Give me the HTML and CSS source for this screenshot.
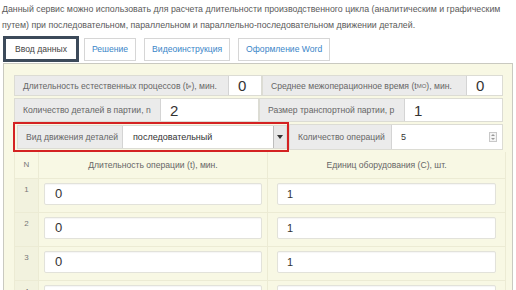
FILE: index.html
```html
<!DOCTYPE html>
<html lang="ru">
<head>
  <meta charset="UTF-8">
  <title>Расчет длительности производственного цикла</title>
  <link rel="stylesheet" href="styles.css">
</head>
<body>
  <!-- Описание -->
  <p class="intro">Данный сервис можно использовать для расчета длительности производственного цикла (аналитическим и графическим<br>путем) при последовательном, параллельном и параллельно-последовательном движении деталей.</p>

  <!-- Вкладки -->
  <div class="tabs">
    <span class="tab active">Ввод данных</span>
    <span class="tab">Решение</span>
    <span class="tab">Видеоинструкция</span>
    <span class="tab">Оформление Word</span>
  </div>

  <div class="panel">
    <div class="row">
      <div class="group g-te">
        <span class="addon">Длительность естественных процессов (t<sub>e</sub>), мин.</span>
        <span class="field big">0</span>
      </div>
      <div class="group g-tmo">
        <span class="addon">Среднее межоперационное время (t<sub>МО</sub>), мин.</span>
        <span class="field big">0</span>
      </div>
    </div>

    <div class="row row-two">
      <div class="group g-n">
        <span class="addon">Количество деталей в партии, n</span>
        <span class="field big">2</span>
      </div>
      <div class="group g-p">
        <span class="addon">Размер транспортной партии, p</span>
        <span class="field big">1</span>
      </div>
    </div>

    <div class="row row-move">
      <div class="highlight">
        <div class="group g-move">
          <span class="addon">Вид движения деталей</span>
          <span class="select">
            <span class="select-text">последовательный</span>
            <span class="select-btn"><svg width="6" height="4" viewBox="0 0 6 4"><path d="M0 0h6L3 4z" fill="#333"/></svg></span>
          </span>
        </div>
      </div>
      <div class="group g-ops">
        <span class="addon">Количество операций</span>
        <span class="field small">5
          <span class="spin"><svg width="8" height="10" viewBox="0 0 8 10"><rect x="0.5" y="0.5" width="7" height="9" fill="#f4f4f4" stroke="#c8c8c8"/><path d="M2 4h4L4 2zM2 6h4L4 8z" fill="#999"/></svg></span>
        </span>
      </div>
    </div>

    <table class="ops">
      <thead>
        <tr>
          <th class="num">N</th>
          <th class="col-t">Длительность операции (t), мин.</th>
          <th class="col-c">Единиц оборудования (C), шт.</th>
        </tr>
      </thead>
      <tbody>
        <tr><td class="num">1</td><td class="col-t"><span class="cell-input">0</span></td><td class="col-c"><span class="cell-input">1</span></td></tr>
        <tr><td class="num">2</td><td class="col-t"><span class="cell-input">0</span></td><td class="col-c"><span class="cell-input">1</span></td></tr>
        <tr><td class="num">3</td><td class="col-t"><span class="cell-input">0</span></td><td class="col-c"><span class="cell-input">1</span></td></tr>
        <tr><td class="num">4</td><td class="col-t"><span class="cell-input">0</span></td><td class="col-c"><span class="cell-input">1</span></td></tr>
      </tbody>
    </table>
  </div>
</body>
</html>
```

FILE: styles.css
```css
/* General */
* {
  box-sizing: border-box;
}

body {
  font-family: "Liberation Sans", Arial, sans-serif;
  margin: 0;
  padding: 0;
  background-color: #ffffff;
  color: #555555;
  overflow: hidden;
}

/* Описание */
.intro {
  margin: 0;
  padding: 1px 0 0 2px;
  font-size: 8.8px;
  line-height: 16px;
  color: #5a5a5a;
  white-space: nowrap;
}

sub {
  font-size: 6px;
  vertical-align: -2px;
}

/* Вкладки */
.tabs {
  display: flex;
  align-items: center;
  gap: 8px;
  margin-top: 3px;
  padding-left: 3px;
  height: 26px;
}

.tab {
  display: flex;
  align-items: center;
  padding: 0 7px;
  border: 1px solid #d6d6d6;
  font-size: 8.6px;
  color: #3a86c8;
  background-color: #ffffff;
  height: 23px;
}

.tab.active {
  border: 3px solid #3c4a5a;
  color: #444444;
  height: 26px;
  padding: 0 9px;
}

.tab.active + .tab {
  margin-left: -3px;
}

/* Панель */
.panel {
  margin: 1px 3px 0 3px;
  border: 1px solid #c9c9c0;
  border-bottom: none;
  background-color: #f8f8e4;
  padding: 11px 9px 0 10px;
  height: 240px;
}

.row {
  display: flex;
  margin-bottom: 2px;
}

.group {
  display: flex;
  height: 21px;
  border: 1px solid #dcdcd4;
  background-color: #ffffff;
}

.addon {
  display: flex;
  align-items: center;
  background-color: #ebebeb;
  border-right: 1px solid #d4d4d4;
  font-size: 8.6px;
  color: #666666;
  padding: 0 8px;
  white-space: nowrap;
}

.field {
  display: flex;
  align-items: center;
  background-color: #ffffff;
  color: #333333;
  padding: 0 9px;
}

.field.big {
  font-size: 15px;
}

.field.small {
  font-size: 9px;
  position: relative;
  flex: 1;
}

.spin {
  position: absolute;
  right: 5px;
  top: 7px;
  line-height: 0;
}

.g-te { width: 248px; }
.g-te .addon { width: 214px; }
.g-te .field { flex: 1; }

.g-tmo { flex: 1; }
.g-tmo .addon { width: 204px; }
.g-tmo .field { flex: 1; }

.row-two {
  margin-bottom: 0;
}

.row-two .group { height: 24px; }

.g-n { width: 245px; }
.g-n .addon { width: 146px; }
.g-n .field { flex: 1; }

.g-p { flex: 1; }
.g-p .addon { width: 145px; }
.g-p .field { flex: 1; }

/* Вид движения */
.row-move {
  align-items: center;
  margin-bottom: 0;
}

.highlight {
  border: 2px solid #d42222;
  padding: 1px 0 1px 2px;
  width: 276px;
  margin-left: -1px;
}

.g-move {
  height: 24px;
}

.g-move .addon {
  width: 105px;
}

.select {
  flex: 1;
  display: flex;
  align-items: center;
  justify-content: space-between;
  background-color: #ffffff;
  font-size: 9px;
  color: #333333;
  padding-left: 10px;
}

.select-btn {
  display: flex;
  align-items: center;
  justify-content: center;
  width: 13px;
  height: 100%;
  background-color: #e8e8e8;
  border-left: 1px solid #bdbdbd;
}

.g-ops {
  flex: 1;
  height: 26px;
}

.g-ops .addon {
  width: 102px;
}

/* Таблица операций */
.ops {
  border-collapse: collapse;
  width: 492px;
}

.ops th,
.ops td {
  border: 1px solid #ecebd4;
  padding: 0;
}

.ops thead tr {
  height: 26px;
}

.ops th {
  font-weight: normal;
  font-size: 8.6px;
  color: #666666;
  text-align: center;
  border-top: none;
}

.ops tbody tr {
  height: 34px;
}

.ops td {
  vertical-align: top;
  padding-top: 4px;
}

.ops .num {
  width: 24px;
  font-size: 8px;
  color: #777777;
  text-align: center;
  background-color: #f2f2de;
}

.ops td.num {
  padding-top: 6px;
}

.ops th.num {
  background-color: #f8f8e4;
}

.ops .col-t {
  width: 229px;
  padding-left: 5px;
  padding-right: 5px;
}

.ops .col-c {
  padding-left: 9px;
  padding-right: 9px;
}

.cell-input {
  display: flex;
  align-items: center;
  height: 22px;
  border: 1px solid #e2e2da;
  border-radius: 2px;
  background-color: #ffffff;
  font-size: 13px;
  color: #333333;
  padding-left: 10px;
  box-shadow: inset 0 1px 1px rgba(0, 0, 0, 0.04);
}

.ops .col-c .cell-input {
  font-size: 11px;
  padding-left: 9px;
}
```
